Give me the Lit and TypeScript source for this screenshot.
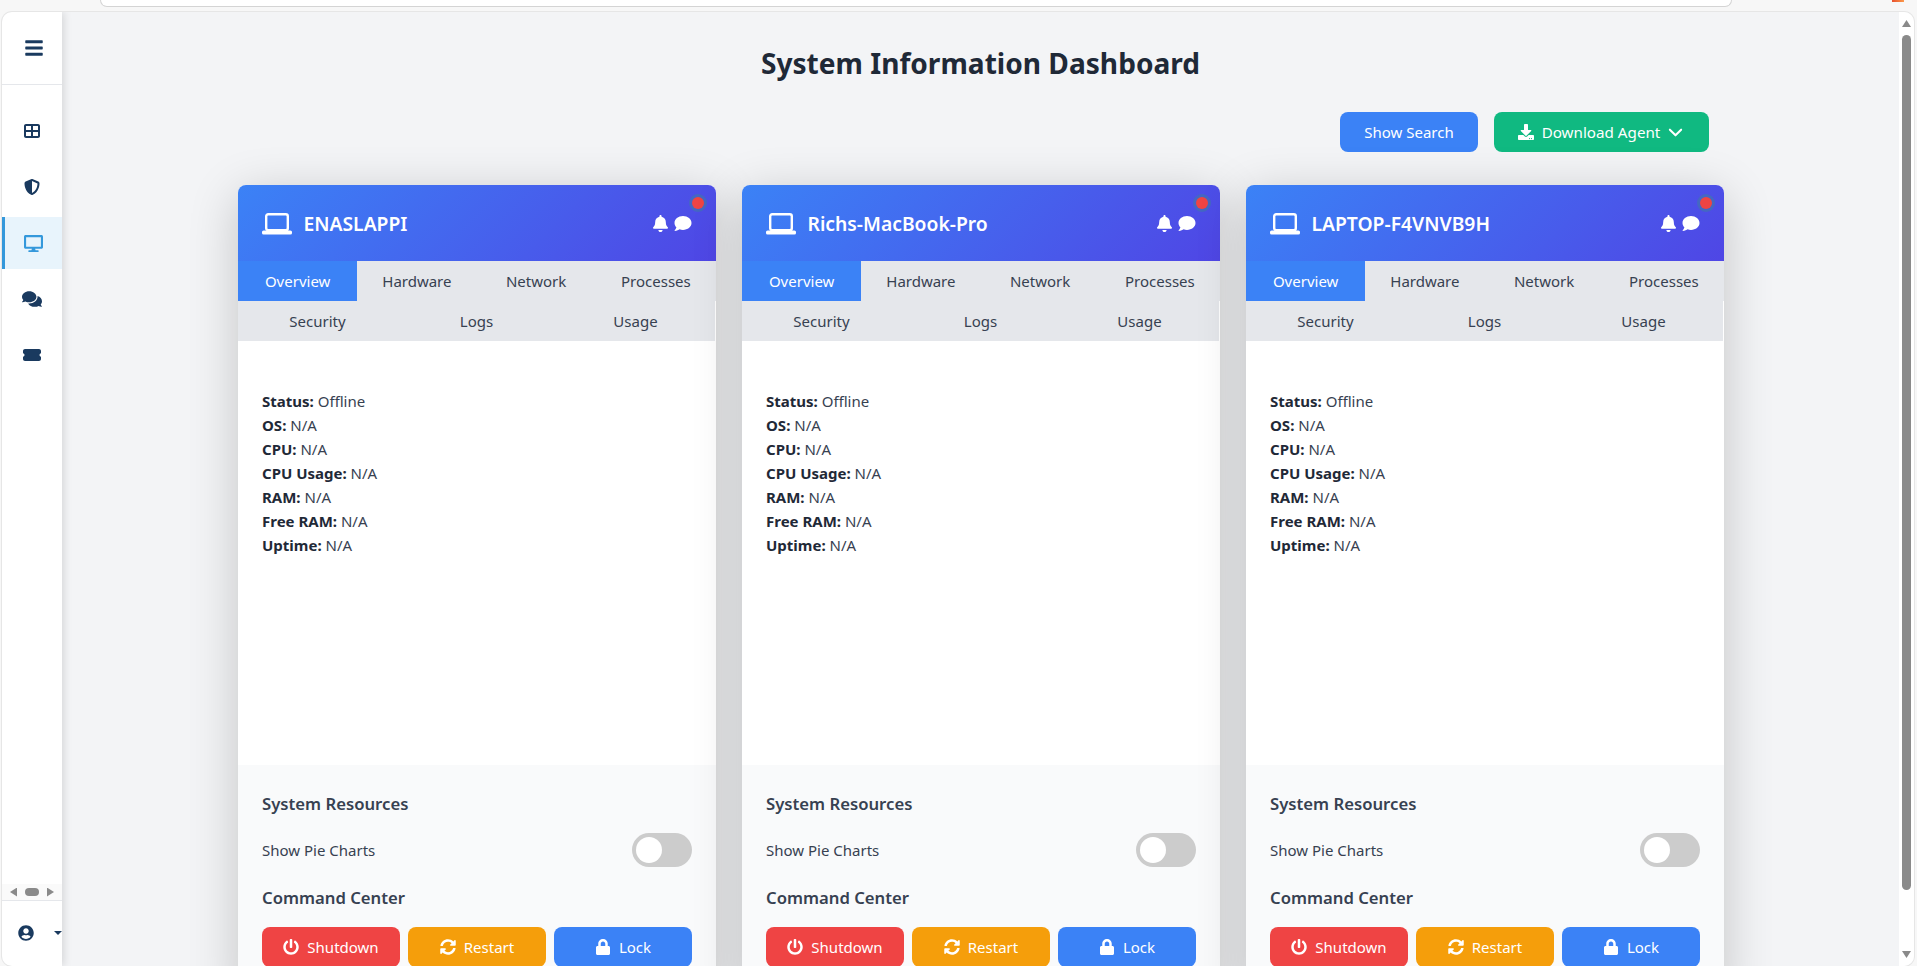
import { LitElement, html, css } from "lit";
import { customElement } from "lit/decorators.js";

const icon = (vb: string, d: string, cls: string) =>
  html`<svg class=${cls} viewBox=${vb} fill="currentColor" aria-hidden="true"><path d=${d}></path></svg>`;

const P = {
  bars: "M16 132h416c8.837 0 16-7.163 16-16V76c0-8.837-7.163-16-16-16H16C7.163 60 0 67.163 0 76v40c0 8.837 7.163 16 16 16zm0 160h416c8.837 0 16-7.163 16-16v-40c0-8.837-7.163-16-16-16H16c-8.837 0-16 7.163-16 16v40c0 8.837 7.163 16 16 16zm0 160h416c8.837 0 16-7.163 16-16v-40c0-8.837-7.163-16-16-16H16c-8.837 0-16 7.163-16 16v40c0 8.837 7.163 16 16 16z",
  grid: "M448 96V224H288V96H448zm0 192V416H288V288H448zM224 224H64V96H224V224zM64 288H224V416H64V288zM64 32C28.7 32 0 60.7 0 96V416c0 35.3 28.7 64 64 64H448c35.3 0 64-28.7 64-64V96c0-35.3-28.7-64-64-64H64z",
  shield: "M256 0c4.6 0 9.2 1 13.4 2.9L457.7 82.8c22 9.3 38.4 31 38.3 57.2c-.5 99.2-41.3 280.7-213.6 363.2c-16.7 8-36.1 8-52.8 0C57.3 420.7 16.5 239.2 16 140c-.1-26.2 16.3-47.9 38.3-57.2L242.7 2.9C246.8 1 251.4 0 256 0zm0 66.8V444.8C394 378 431.1 230.1 432 141.4L256 66.8z",
  desktop: "M528 0H48C21.5 0 0 21.5 0 48v320c0 26.5 21.5 48 48 48h192l-16 48h-72c-13.3 0-24 10.7-24 24s10.7 24 24 24h272c13.3 0 24-10.7 24-24s-10.7-24-24-24h-72l-16-48h192c26.5 0 48-21.5 48-48V48c0-26.5-21.5-48-48-48zm-16 352H64V64h448v288z",
  comments: "M416 192c0-88.4-93.1-160-208-160S0 103.6 0 192c0 34.3 14.1 65.9 38 92-13.4 30.2-35.5 54.2-35.8 54.5-2.2 2.3-2.8 5.7-1.5 8.7S4.8 352 8 352c36.6 0 66.9-12.3 88.7-25 32.2 15.7 70.3 25 111.3 25 114.9 0 208-71.6 208-160zm122 220c23.9-26 38-57.7 38-92 0-66.9-53.5-124.2-129.3-148.1.9 6.6 1.3 13.3 1.3 20.1 0 105.9-107.7 192-240 192-10.8 0-21.3-.8-31.7-1.9C207.8 439.6 281.8 480 368 480c41 0 79.1-9.2 111.3-25 21.8 12.7 52.1 25 88.7 25 3.2 0 6.1-1.9 7.3-4.8 1.3-2.9.7-6.3-1.5-8.7-.3-.3-22.4-24.2-35.8-54.5z",
  ticket: "M0 128C0 92.7 28.7 64 64 64H512c35.3 0 64 28.7 64 64v64c0 8.8-7.4 15.7-15.7 18.6C541.5 217.1 528 235 528 256s13.5 38.9 32.3 45.4c8.3 2.9 15.7 9.8 15.7 18.6v64c0 35.3-28.7 64-64 64H64c-35.3 0-64-28.7-64-64V320c0-8.8 7.4-15.7 15.7-18.6C34.5 294.9 48 277 48 256s-13.5-38.9-32.3-45.4C7.4 207.7 0 200.8 0 192V128z",
  user: "M248 8C111 8 0 119 0 256s111 248 248 248 248-111 248-248S385 8 248 8zm0 96c48.6 0 88 39.4 88 88s-39.4 88-88 88-88-39.4-88-88 39.4-88 88-88zm0 344c-58.7 0-111.3-26.6-146.5-68.2 18.8-35.4 55.6-59.8 98.5-59.8 2.4 0 4.8.4 7.1 1.1 13 4.2 26.6 6.9 40.9 6.9 14.3 0 28-2.7 40.9-6.9 2.3-.7 4.7-1.1 7.1-1.1 42.9 0 79.7 24.4 98.5 59.8C359.3 421.4 306.7 448 248 448z",
  bell: "M224 512c35.32 0 63.97-28.65 63.97-64H160.03c0 35.35 28.65 64 63.97 64zm215.39-149.71c-19.32-20.76-55.47-51.99-55.47-154.29 0-77.7-54.48-139.9-127.94-155.16V32c0-17.67-14.32-32-31.98-32s-31.98 14.33-31.98 32v20.84C118.56 68.1 64.08 130.3 64.08 208c0 102.3-36.15 133.53-55.47 154.29-6 6.45-8.66 14.16-8.61 21.71.11 16.4 12.98 32 32.1 32h383.8c19.12 0 32-15.6 32.1-32 .05-7.55-2.61-15.27-8.61-21.71z",
  comment: "M256 32C114.6 32 0 125.1 0 240c0 49.6 21.4 95 57 130.7C44.5 421.1 2.7 466 2.2 466.5c-2.2 2.3-2.8 5.7-1.5 8.7S4.8 480 8 480c66.3 0 116-31.8 146.9-50.6C181.1 437.5 216.7 448 256 448c141.4 0 256-93.1 256-208S397.4 32 256 32z",
  power: "M400 54.1c63 45 104 118.6 104 201.9 0 136.8-110.8 247.7-247.5 248C120 504.3 8.2 393 8 256.4 7.9 173.1 48.9 99.3 111.8 54.2c11.7-8.3 28-4.8 35 7.7L162.6 90c5.9 10.5 3.1 23.8-6.6 31-41.5 30.8-68 79.6-68 134.9-.1 92.3 74.5 168.1 168 168.1 91.6 0 168.6-74.2 168-169.1-.3-51.8-24.7-101.8-68.1-134-9.7-7.2-12.4-20.5-6.5-30.9l15.8-28.1c7-12.4 23.2-16.1 34.8-7.8zM296 264V24c0-13.3-10.7-24-24-24h-32c-13.3 0-24 10.7-24 24v240c0 13.3 10.7 24 24 24h32c13.3 0 24-10.7 24-24z",
  sync: "M370.72 133.28C339.458 104.008 298.888 87.962 255.848 88c-77.458.068-144.328 53.178-162.791 126.85-1.344 5.363-6.122 9.15-11.651 9.15H24.103c-7.498 0-13.194-6.807-11.807-14.176C33.933 94.924 134.813 8 256 8c66.448 0 126.791 26.136 171.315 68.685L463.03 40.97C478.149 25.851 504 36.559 504 57.941V192c0 13.255-10.745 24-24 24H345.941c-21.382 0-32.09-25.851-16.971-40.971l41.75-41.749zM32 296h134.059c21.382 0 32.09 25.851 16.971 40.971l-41.75 41.75c31.262 29.273 71.835 45.319 114.876 45.28 77.418-.07 144.315-53.144 162.787-126.849 1.344-5.363 6.122-9.15 11.651-9.15h57.304c7.498 0 13.194 6.807 11.807 14.176C478.067 417.076 377.187 504 256 504c-66.448 0-126.791-26.136-171.315-68.685L48.97 471.03C33.851 486.149 8 475.441 8 454.059V320c0-13.255 10.745-24 24-24z",
  lock: "M400 224h-24v-72C376 68.2 307.8 0 224 0S72 68.2 72 152v72H48c-26.5 0-48 21.5-48 48v192c0 26.5 21.5 48 48 48h352c26.5 0 48-21.5 48-48V272c0-26.5-21.5-48-48-48zm-104 0H152v-72c0-39.7 32.3-72 72-72s72 32.3 72 72v72z",
  download: "M216 0h80c13.3 0 24 10.7 24 24v168h87.7c17.8 0 26.7 21.5 14.1 34.1L269.7 378.3c-7.5 7.5-19.8 7.5-27.3 0L90.1 226.1c-12.6-12.6-3.7-34.1 14.1-34.1H192V24c0-13.3 10.7-24 24-24zm296 376v112c0 13.3-10.7 24-24 24H24c-13.3 0-24-10.7-24-24V376c0-13.3 10.7-24 24-24h146.7l49 49c20.1 20.1 52.5 20.1 72.6 0l49-49H488c13.3 0 24 10.7 24 24zm-124 88c0-11-9-20-20-20s-20 9-20 20 9 20 20 20 20-9 20-20zm64 0c0-11-9-20-20-20s-20 9-20 20 9 20 20 20 20-9 20-20z",
};

const TABS = ["Overview", "Hardware", "Network", "Processes", "Security", "Logs", "Usage"];
const INFO: [string, string][] = [
  ["Status:", "Offline"],
  ["OS:", "N/A"],
  ["CPU:", "N/A"],
  ["CPU Usage:", "N/A"],
  ["RAM:", "N/A"],
  ["Free RAM:", "N/A"],
  ["Uptime:", "N/A"],
];
const HOSTS = ["ENASLAPPI", "Richs-MacBook-Pro", "LAPTOP-F4VNVB9H"];

@customElement("app-root")
export class AppRoot extends LitElement {
  static styles = css`
    :host {
      display: block;
      width: 1917px;
      height: 966px;
      overflow: hidden;
      background: #f7f7f7;
      font-family: "Noto Sans", "Open Sans", sans-serif;
      color: #374151;
    }
    * { box-sizing: border-box; }
    .chrome {
      height: 12px;
      display: flex;
      justify-content: space-between;
      align-items: flex-start;
      padding: 0 13px 0 100px;
    }
    .address {
      width: 1632px;
      height: 7px;
      background: #fff;
      border: 1px solid #d4d4d4;
      border-top: none;
      border-radius: 0 0 14px 14px;
    }
    .ext {
      width: 12px;
      height: 2px;
      background: linear-gradient(90deg, #e8502e, #fb9a4b);
    }
    .window {
      display: flex;
      height: 954px;
      margin: 0 3px 0 2px;
      border-radius: 10px;
      overflow: hidden;
      background: #f3f4f6;
      box-shadow: 0 0 0 1px #e6e6e6;
    }
    .sidebar {
      width: 60px;
      flex: none;
      display: flex;
      flex-direction: column;
      background: #fff;
      color: #1a3a5f;
      box-shadow: 2px 0 8px rgba(0, 0, 0, 0.12);
      position: relative;
      z-index: 2;
      overflow: hidden;
    }
    .side-head {
      height: 73px;
      flex: none;
      display: flex;
      align-items: center;
      padding-left: 23px;
      border-bottom: 1px solid #e5e7eb;
    }
    .bars { width: 18px; height: 20px; }
    .nav {
      flex: 1;
      display: flex;
      flex-direction: column;
      gap: 4px;
      padding-top: 20px;
    }
    .item {
      height: 52px;
      display: flex;
      align-items: center;
      justify-content: center;
    }
    .item.active {
      background: #e8f4fc;
      color: #3498db;
      border-left: 3px solid #3498db;
    }
    .i-grid { width: 16px; height: 16px; }
    .i-shield { width: 16px; height: 16px; }
    .i-desktop { width: 19px; height: 17px; }
    .i-comments { width: 20px; height: 18px; }
    .i-ticket { width: 18px; height: 16px; }
    .hbar {
      height: 17px;
      flex: none;
      display: flex;
      align-items: center;
      justify-content: space-between;
      padding: 0 8px;
      background: #fafafa;
      border-bottom: 1px solid #e5e7eb;
    }
    .tri-l, .tri-r { width: 7px; height: 9px; background: #8a8a8a; }
    .tri-l { clip-path: polygon(100% 0, 100% 100%, 0 50%); }
    .tri-r { clip-path: polygon(0 0, 0 100%, 100% 50%); }
    .hthumb { width: 14px; height: 8px; border-radius: 4px; background: #8a8a8a; }
    .side-foot {
      height: 64px;
      flex: none;
      display: flex;
      align-items: center;
      padding: 0 0 0 16px;
      margin-bottom: 1px;
    }
    .i-user { width: 16px; height: 16px; flex: none; }
    .caret {
      width: 8px;
      height: 4px;
      flex: none;
      margin-left: 20px;
      background: #1a3a5f;
      clip-path: polygon(0 0, 100% 0, 50% 100%);
    }
    .main {
      flex: 1;
      min-width: 0;
      overflow: hidden;
      position: relative;
    }
    h1 {
      margin: 0;
      padding-top: 31px;
      height: 100px;
      text-align: center;
      font-size: 28.1px;
      line-height: 40px;
      font-weight: 700;
      color: #1f2937;
    }
    .actions {
      display: flex;
      justify-content: flex-end;
      gap: 16px;
      padding-right: 190px;
      height: 73px;
    }
    .act {
      height: 40px;
      border-radius: 8px;
      display: flex;
      align-items: center;
      justify-content: center;
      color: #fff;
      font-size: 15px;
    }
    .act.search { width: 138px; background: #3b82f6; }
    .act.agent { width: 215px; background: #10b981; gap: 8px; }
    .act.agent span { font-size: 15.2px; }
    .i-download { width: 16px; height: 16px; margin-left: -2px; }
    .chev { width: 15px; height: 15px; }
    .cards {
      display: grid;
      grid-template-columns: repeat(3, 478px);
      gap: 26px;
      padding-left: 176px;
    }
    .card {
      border-radius: 8px;
      background: #fff;
      box-shadow: 0 10px 50px rgba(0, 0, 0, 0.2);
      position: relative;
      overflow: hidden;
    }
    .head {
      height: 76px;
      display: flex;
      align-items: center;
      padding: 1px 24px 0;
      color: #fff;
      background: linear-gradient(135deg, #3b82f6, #4f46e5);
    }
    .i-laptop { width: 30px; height: 22px; flex: none; }
    .name { margin-left: 11.5px; font-size: 19.3px; font-weight: 600; flex: 1; }
    .i-bell { width: 15px; height: 17px; }
    .i-comment { width: 18px; height: 17px; margin-left: 6px; }
    .dot {
      position: absolute;
      top: 12px;
      right: 12px;
      width: 12px;
      height: 12px;
      border-radius: 50%;
      background: #ef4444;
      box-shadow: 0 0 0 3px rgba(64, 120, 170, 0.6);
    }
    .tabs {
      display: flex;
      flex-wrap: wrap;
      padding-right: 1px;
    }
    .tab {
      flex: 1 0 25%;
      height: 40px;
      display: flex;
      align-items: center;
      justify-content: center;
      font-size: 15px;
      color: #374151;
      background: #e5e7eb;
    }
    .tab:nth-child(-n + 4) { flex: 0 0 25%; }
    .tab:nth-child(4) { flex-basis: calc(25% + 1px); margin-right: -1px; }
    .tab.active { background: #3b82f6; color: #fff; }
    .info {
      height: 424px;
      padding: 48px 24px 0;
      font-size: 15px;
      line-height: 24px;
      color: #374151;
    }
    .info b { font-weight: 700; color: #1f2937; }
    .extra {
      background: #f9fafb;
      padding: 24px 24px 32px;
    }
    h3 {
      margin: 0 0 -2px;
      font-size: 16.7px;
      line-height: 30px;
      font-weight: 600;
      color: #374151;
    }
    .pie {
      display: flex;
      justify-content: space-between;
      align-items: center;
      height: 34px;
      margin: 16px 0 16px;
      font-size: 15px;
    }
    .toggle {
      width: 60px;
      height: 34px;
      border-radius: 17px;
      background: #ccc;
      padding: 4px;
    }
    .knob { width: 26px; height: 26px; border-radius: 50%; background: #fff; }
    .cmds {
      display: grid;
      grid-template-columns: repeat(3, 1fr);
      gap: 8px;
      margin-top: 16px;
    }
    .cmd {
      height: 40px;
      border-radius: 8px;
      display: flex;
      align-items: center;
      justify-content: center;
      gap: 8px;
      color: #fff;
      font-size: 15px;
    }
    .cmd svg { width: 16px; height: 16px; }
    .red { background: #ef4444; }
    .amber { background: #f59e0b; }
    .blue { background: #3b82f6; }
    .vbar {
      width: 15px;
      flex: none;
      display: flex;
      flex-direction: column;
      align-items: center;
      background: #fff;
      padding-top: 8px;
      position: relative;
      z-index: 2;
    }
    .tri-u, .tri-d { width: 9px; height: 7px; background: #8a8a8a; flex: none; }
    .tri-u { clip-path: polygon(50% 0, 100% 100%, 0 100%); }
    .tri-d { clip-path: polygon(0 0, 100% 0, 50% 100%); }
    .vthumb {
      width: 9px;
      height: 855px;
      margin: 8px 0 61px;
      flex: none;
      border-radius: 5px;
      background: #8a8a8a;
    }
  `;

  private card(host: string) {
    return html`
      <article class="card">
        <div class="head">
          <svg class="i-laptop" viewBox="0 0 30 22" fill="none" aria-hidden="true">
            <rect x="4.2" y="1.2" width="21.6" height="16" rx="2" stroke="currentColor" stroke-width="2.4"></rect>
            <rect x="0" y="17.5" width="30" height="4" rx="1.6" fill="currentColor"></rect>
          </svg>
          <span class="name">${host}</span>
          ${icon("0 0 448 512", P.bell, "i-bell")}
          ${icon("0 0 512 512", P.comment, "i-comment")}
        </div>
        <span class="dot"></span>
        <div class="tabs">
          ${TABS.map((t, i) => html`<div class="tab ${i === 0 ? "active" : ""}">${t}</div>`)}
        </div>
        <div class="info">
          ${INFO.map(([k, v]) => html`<div><b>${k}</b> ${v}</div>`)}
        </div>
        <div class="extra">
          <h3>System Resources</h3>
          <div class="pie">
            <span>Show Pie Charts</span>
            <div class="toggle"><div class="knob"></div></div>
          </div>
          <h3>Command Center</h3>
          <div class="cmds">
            <div class="cmd red">${icon("0 0 512 512", P.power, "")}Shutdown</div>
            <div class="cmd amber">${icon("0 0 512 512", P.sync, "")}Restart</div>
            <div class="cmd blue">${icon("0 0 448 512", P.lock, "")}Lock</div>
          </div>
        </div>
      </article>
    `;
  }

  render() {
    return html`
      <div class="chrome">
        <div class="address"></div>
        <div class="ext"></div>
      </div>
      <div class="window">
        <aside class="sidebar">
          <div class="side-head">${icon("0 0 448 512", P.bars, "bars")}</div>
          <nav class="nav">
            <div class="item">${icon("0 0 512 512", P.grid, "i-grid")}</div>
            <div class="item">${icon("0 0 512 512", P.shield, "i-shield")}</div>
            <div class="item active">${icon("0 0 576 512", P.desktop, "i-desktop")}</div>
            <div class="item">${icon("0 0 576 512", P.comments, "i-comments")}</div>
            <div class="item">${icon("0 0 576 512", P.ticket, "i-ticket")}</div>
          </nav>
          <div class="hbar">
            <span class="tri-l"></span><span class="hthumb"></span><span class="tri-r"></span>
          </div>
          <div class="side-foot">
            ${icon("0 0 496 512", P.user, "i-user")}
            <span class="caret"></span>
          </div>
        </aside>
        <main class="main">
          <h1>System Information Dashboard</h1>
          <div class="actions">
            <div class="act search">Show Search</div>
            <div class="act agent">
              ${icon("0 0 512 512", P.download, "i-download")}
              <span>Download Agent</span>
              <svg class="chev" viewBox="0 0 16 16" fill="none" aria-hidden="true">
                <path d="M2 5l6 6 6-6" stroke="currentColor" stroke-width="2.2" stroke-linecap="round" stroke-linejoin="round"></path>
              </svg>
            </div>
          </div>
          <section class="cards">${HOSTS.map((h) => this.card(h))}</section>
        </main>
        <div class="vbar">
          <span class="tri-u"></span>
          <span class="vthumb"></span>
          <span class="tri-d"></span>
        </div>
      </div>
    `;
  }
}
